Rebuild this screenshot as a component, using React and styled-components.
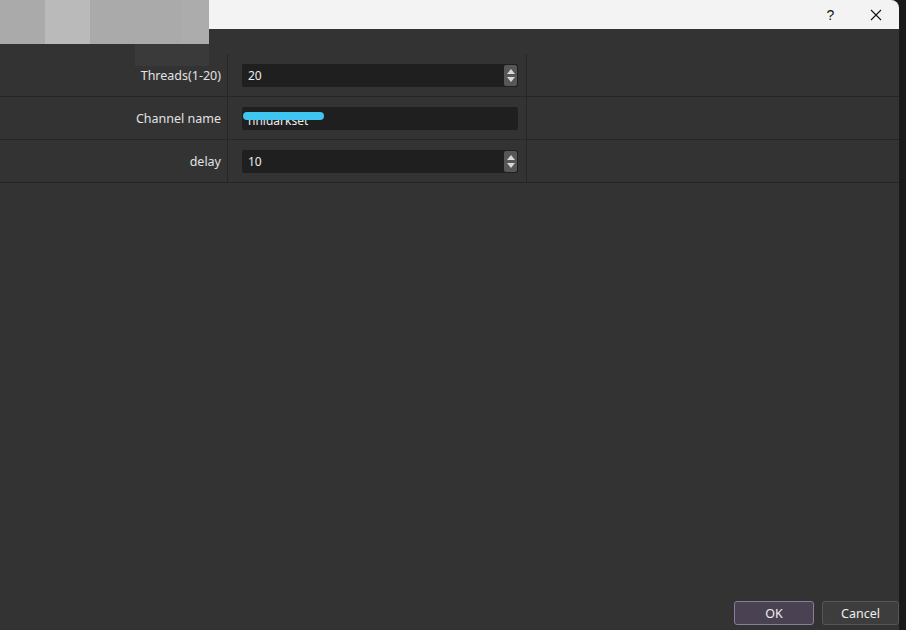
import React from "react";
import styled, { createGlobalStyle } from "styled-components";

const Global = createGlobalStyle`
  html, body { margin: 0; padding: 0; background: #1b1b1b; }
  body { font-family: "Noto Sans", "Open Sans", "Liberation Sans", sans-serif; }
`;

const Screen = styled.div`
  position: relative;
  width: 906px;
  height: 630px;
  display: flex;
  overflow: hidden;
`;

const Window = styled.div`
  width: 899px;
  height: 630px;
  display: flex;
  flex-direction: column;
  background: #333333;
  border-top-right-radius: 8px;
  overflow: hidden;
`;

const TitleBar = styled.div`
  height: 29px;
  flex: none;
  background: #f3f3f3;
  display: flex;
  justify-content: flex-end;
  align-items: center;
  padding-right: 1px;
`;

const TitleButton = styled.div`
  width: 45px;
  height: 29px;
  display: flex;
  align-items: center;
  justify-content: center;
  color: #111;
  font-size: 14px;
  font-family: "Liberation Sans", sans-serif;
`;

const Body = styled.div`
  flex: 1;
  display: flex;
  flex-direction: column;
  padding-top: 25px;
`;

const Table = styled.div`
  display: flex;
  flex-direction: column;
`;

const Row = styled.div`
  height: 42px;
  display: flex;
  border-bottom: 1px solid #262626;
`;

const LabelCell = styled.div`
  width: 221px;
  padding-right: 6px;
  flex: none;
  display: flex;
  align-items: center;
  justify-content: flex-end;
  color: #e2e2e2;
  font-size: 12.5px;
  border-right: 1px solid #262626;
`;

const FieldCell = styled.div`
  width: 299px;
  flex: none;
  display: flex;
  align-items: center;
  padding-left: 14px;
  box-sizing: border-box;
  border-right: 1px solid #262626;
`;

const Input = styled.div`
  position: relative;
  width: 276px;
  height: 23px;
  background: #1f1f1f;
  border-radius: 2px;
  display: flex;
  align-items: center;
  padding-left: 6px;
  box-sizing: border-box;
  color: #ececec;
  font-size: 12px;
`;

const Spinner = styled.div`
  position: absolute;
  right: 1px;
  top: 1px;
  bottom: 1px;
  width: 13px;
  background: #575757;
  border-radius: 2px;
  display: flex;
  flex-direction: column;
  align-items: center;
  justify-content: center;
  gap: 3px;
`;

const Arrow = styled.div`
  width: 0;
  height: 0;
  border-left: 4px solid transparent;
  border-right: 4px solid transparent;
  ${(p) => (p.$up ? "border-bottom: 5px solid #d8d8d8;" : "border-top: 5px solid #d8d8d8;")}
`;

const Scribble = styled.div`
  position: absolute;
  left: 1px;
  top: 5px;
  width: 81px;
  height: 8px;
  border-radius: 4px;
  background: #3ec6f0;
`;

const HiddenText = styled.span`
  margin-top: 4px;
`;

const Footer = styled.div`
  margin-top: auto;
  display: flex;
  justify-content: flex-end;
  gap: 8px;
  padding: 0 0 5px 0;
`;

const Button = styled.div`
  width: ${(p) => p.$w}px;
  height: 24px;
  box-sizing: border-box;
  border-radius: 3px;
  display: flex;
  align-items: center;
  justify-content: center;
  color: #eeeeee;
  font-size: 12.5px;
  background: ${(p) => (p.$primary ? "#4a4152" : "#3d3d3d")};
  border: 1px solid ${(p) => (p.$primary ? "#8c7c9c" : "#565656")};
`;

const Redaction = styled.div`
  position: absolute;
  left: 0;
  top: 0;
  width: 209px;
  height: 44px;
  display: flex;
`;

const Blur = styled.div`
  width: ${(p) => p.$w}px;
  background: ${(p) => p.$c};
`;

const Blur2 = styled.div`
  position: absolute;
  left: 135px;
  top: 44px;
  width: 74px;
  height: 22px;
  background: #3a3a3a;
`;

const SideStrip = styled.div`
  flex: 1;
  background: #1a1a1a;
`;

function NumberField({ value }) {
  return (
    <Input>
      {value}
      <Spinner>
        <Arrow $up />
        <Arrow />
      </Spinner>
    </Input>
  );
}

export default function App() {
  return (
    <>
      <Global />
      <Screen>
        <Window>
          <TitleBar>
            <TitleButton>?</TitleButton>
            <TitleButton>
              <svg width="12" height="12" viewBox="0 0 12 12">
                <path d="M1 1L11 11M11 1L1 11" stroke="#111" strokeWidth="1.1" />
              </svg>
            </TitleButton>
          </TitleBar>
          <Body>
            <Table>
              <Row>
                <LabelCell>Threads(1-20)</LabelCell>
                <FieldCell>
                  <NumberField value="20" />
                </FieldCell>
              </Row>
              <Row>
                <LabelCell>Channel name</LabelCell>
                <FieldCell>
                  <Input>
                    <HiddenText>nnldarkset</HiddenText>
                    <Scribble />
                  </Input>
                </FieldCell>
              </Row>
              <Row>
                <LabelCell>delay</LabelCell>
                <FieldCell>
                  <NumberField value="10" />
                </FieldCell>
              </Row>
            </Table>
            <Footer>
              <Button $primary $w={80}>OK</Button>
              <Button $w={77}>Cancel</Button>
            </Footer>
          </Body>
        </Window>
        <SideStrip />
        <Redaction>
          <Blur $w={45} $c="#aaaaaa" />
          <Blur $w={45} $c="#bababa" />
          <Blur $w={91} $c="#aaaaaa" />
          <Blur $w={28} $c="#acacac" />
        </Redaction>
        <Blur2 />
      </Screen>
    </>
  );
}
